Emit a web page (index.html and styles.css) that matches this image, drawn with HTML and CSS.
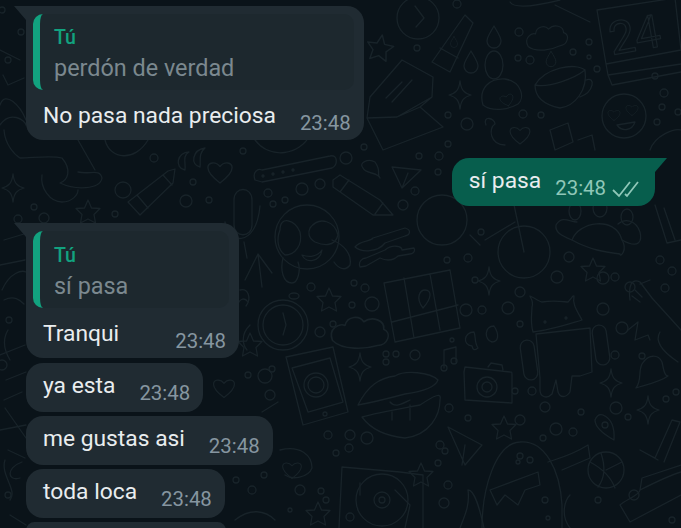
FILE: index.html
```html
<!DOCTYPE html>
<html>
<head>
  <title>Chat</title>
  <link rel="stylesheet" href="styles.css">
</head>
<body>
  <div class="chat">
    <svg class="wallpaper" width="681" height="528" viewBox="0 0 681 528" aria-hidden="true">
      <defs>
        <path id="star" d="M0-12 3.5-4 12-3.5 6 2.5 7.5 11 0 7-7.5 11-6 2.5-12-3.5-3.5-4Z"/>
        <path id="spark" d="M0-14C1-5 4-2 11 0 4 2 1 5 0 14-1 5-4 2-11 0-4-2-1-5 0-14Z"/>
        <path id="heart" d="M0 10C-8 4-11 0-11-4-11-9-4-10 0-5 4-10 11-9 11-4 11 0 8 4 0 10Z"/>
        <path id="cloud" d="M-22 6C-26-4-16-8-12-6-10-14 0-14 3-9 10-14 20-10 19-3 26 0 22 10 14 10 4 13-14 14-22 6Z"/>
        <path id="drop" d="M0-11C4-4 7 0 7 4A7 7 0 0 1-7 4C-7 0-4-4 0-11Z"/>
      </defs>

      <!-- top right -->
      <circle cx="418" cy="18" r="21"/><path d="M415 6 424 18 416 27"/>
      <path d="M432 62 450 72 473 23 465 15Z M440 48 458 58"/><use href="#drop" transform="translate(454 42) scale(.5)"/>
      <use href="#drop" x="494" y="37"/><use href="#drop" x="471" y="62"/>
      <ellipse cx="494" cy="65" rx="9" ry="14"/>
      <use href="#cloud" transform="translate(547 38) scale(.9 .95) rotate(-8)"/>
      <use href="#drop" transform="translate(551 59) scale(.7)"/>
      <path d="M597 10 675-2 681 50 606 64Z M606 64 608 75 681 64 M608 75 612 85 681 72"/>
      <text class="doodle-num" x="612" y="55" transform="rotate(-10 612 55)">24</text>
      <path d="M535 85C545 68 575 62 585 70 588 90 575 106 560 108 545 105 535 98 535 85Z M535 85C550 88 575 78 585 70 M586 80C596 76 594 92 580 97"/>
      <circle cx="624" cy="116" r="22"/><use href="#heart" transform="translate(614 115) scale(.55)"/><use href="#heart" transform="translate(632 110) scale(.55)"/>
      <path d="M617 125C622 132 632 131 635 122Z"/>
      <use href="#spark" x="460" y="95"/>
      <path d="M483 105C478 88 490 78 505 79 522 82 525 98 518 104 508 110 492 112 483 105Z"/><use href="#heart" transform="translate(507 100) scale(.6) rotate(-15)"/>
      <use href="#star" transform="translate(380 48) rotate(10) scale(1.1)"/>
      <path d="M370 97 402 60 433 77 432 97 M370 97 367 118 397 117 420 107 443 127 383 150 367 118 M432 97 420 107 M386 98 402 82 M392 102 412 80 M397 117 432 97"/>
      <path d="M486 125C482 115 495 118 495 124 488 128 490 145 505 145"/><use href="#heart" transform="translate(520 135) scale(.9)"/>
      <path d="M550 130 568 123 573 142 555 150Z M578 140 592 135 595 150"/>
      <circle cx="467" cy="124" r="6"/><circle cx="448" cy="144" r="3"/><circle cx="448" cy="115" r="3"/><circle cx="523" cy="114" r="4"/><circle cx="541" cy="115" r="3"/>
      <path d="M650 150C655 135 675 128 681 130"/><circle cx="664" cy="93" r="4"/><circle cx="662" cy="107" r="3"/><circle cx="678" cy="112" r="3"/><circle cx="657" cy="122" r="3"/>
      <circle cx="519" cy="32" r="4"/><circle cx="518" cy="58" r="3"/><circle cx="530" cy="60" r="4"/><circle cx="573" cy="52" r="3"/><circle cx="589" cy="42" r="3"/><circle cx="589" cy="57" r="2"/><circle cx="597" cy="69" r="3"/><circle cx="655" cy="76" r="3"/><circle cx="417" cy="48" r="3"/><circle cx="457" cy="4" r="4"/>
      <path d="M510 2C515 10 540 5 560 0 M555 5 590 22"/>

      <!-- band below first bubble -->
      <use href="#spark" x="13" y="188"/>
      <path d="M4 130C5 145 15 155 20 158 32 158 52 155 62 158 72 170 68 180 60 183 75 190 100 190 102 178 100 168 90 175 78 172 M42 175C40 188 50 202 62 202 72 202 78 195 78 190"/>
      <path d="M78 140 95 170 M105 140C110 160 135 162 148 140"/>
      <path d="M189 152C177 152 174 168 185 170 186 163 182 156 189 152Z M205 148C192 150 190 165 200 167 201 160 198 154 205 148Z"/>
      <use href="#heart" transform="translate(220 172) scale(1.1)"/>
      <path d="M128 202 168 171 175 169 173 183 140 215Z M137 195 148 208 M163 175 172 185"/>
      <path d="M234 225V200C234 186 252 186 252 200V225C252 238 234 238 234 225Z"/>
      <path d="M225 222C226 243 256 250 260 206 M244 242 247 258"/>
      <path d="M255 180C252 172 258 168 262 170L330 156C338 154 338 165 332 168L262 182Z"/>
      <circle cx="263" cy="176" r="1"/><circle cx="273" cy="174" r="1"/><circle cx="283" cy="172" r="1"/><circle cx="293" cy="170" r="1"/>
      <path d="M255 140C270 160 300 155 310 135"/>
      <path d="M333 180 340 175 380 200 393 215 373 215 333 187Z M349 180 340 192 M375 214 383 203"/>
      <path d="M363 168C358 163 368 158 375 162 382 172 376 174 380 178 378 172 365 174 363 168Z"/>
      <path d="M392 167 421 170 402 188Z M408 173 402 188"/>
      <use href="#star" x="88" y="212"/>
      <circle cx="123" cy="190" r="8"/><circle cx="186" cy="201" r="6"/><circle cx="193" cy="182" r="3"/><circle cx="209" cy="200" r="3"/>
      <circle cx="154" cy="158" r="4"/><circle cx="243" cy="151" r="3"/><circle cx="268" cy="193" r="4"/><circle cx="273" cy="204" r="3"/><circle cx="285" cy="200" r="3"/>
      <circle cx="302" cy="189" r="6"/><circle cx="320" cy="184" r="5"/><circle cx="346" cy="158" r="6"/><circle cx="364" cy="147" r="3"/><circle cx="419" cy="156" r="3"/><circle cx="439" cy="156" r="4"/><circle cx="438" cy="172" r="3"/><circle cx="415" cy="191" r="4"/><circle cx="403" cy="205" r="5"/><circle cx="34" cy="207" r="3"/><circle cx="18" cy="219" r="4"/><circle cx="44" cy="218" r="5"/><circle cx="115" cy="214" r="3"/>

      <!-- middle -->
      <circle cx="442" cy="220" r="25"/><circle cx="524" cy="252" r="26"/>
      <path d="M524 252 513 200 M485 240 515 222 M470 235 480 245"/><circle cx="481" cy="232" r="3"/>
      <path d="M572 240C578 222 615 215 622 240 628 250 620 258 620 254 605 252 590 250 572 240Z"/>
      <path d="M572 240C560 235 555 232 556 225 562 215 570 222 577 222 M622 240C640 250 642 240 640 232 636 220 625 218 618 224"/>
      <ellipse cx="575" cy="211" rx="6" ry="9"/><ellipse cx="600" cy="208" rx="7" ry="9"/><ellipse cx="627" cy="217" rx="6" ry="8"/>
      <path d="M655 205 667 243 681 240 M664 208 675 240"/>
      <circle cx="307" cy="237" r="32"/>
      <path d="M280 230C280 215 295 220 300 232 303 245 295 255 285 255 278 250 276 240 280 230Z M310 228C320 215 335 222 338 235 335 248 322 245 315 242 308 238 308 232 310 228Z"/>
      <path d="M283 258C280 270 283 283 292 283 298 283 301 270 298 262 M332 240C345 245 352 255 350 265 345 272 338 268 334 262"/>
      <path d="M302 255C310 258 318 256 322 250 320 262 306 264 302 255Z"/>
      <path d="M245 280 258 254 272 273 M258 254 262 287"/>
      <path d="M355 247C360 240 370 242 373 238L405 228C412 230 410 235 405 236L385 243C378 252 362 253 355 247Z"/>
      <path d="M360 267C358 262 362 258 366 258L385 250C392 244 402 246 402 250L414 248C416 252 412 254 410 254L398 256C392 262 384 260 380 258L366 266Z"/>
      <path d="M384 283 450 270 460 328 395 342Z M404 278 414 338 M430 274 440 330 M392 322 458 305"/>
      <path d="M423 308C415 298 420 290 425 290 432 290 432 298 423 308Z"/>
      <use href="#star" x="329" y="300"/><use href="#star" x="593" y="270"/>
      <use href="#spark" x="489" y="281"/>
      <circle cx="283" cy="325" r="25"/><circle cx="283" cy="325" r="20"/><path d="M283 313 286 325 283 335"/>
      <ellipse cx="294" cy="296" rx="5" ry="3"/><path d="M248 302C244 296 238 300 238 306"/>
      <use href="#cloud" transform="translate(360 333) scale(1.25)"/>
      <path d="M474 332C464 332 462 345 472 346 473 350 474 351 478 348 474 342 476 336 474 332Z M494 326C484 326 484 340 492 342 498 342 500 335 494 326Z"/>
      <path d="M286 357 333 347 348 412 303 425Z M292 368 330 358 343 402 308 412Z"/>
      <circle cx="316" cy="385" r="12"/><circle cx="316" cy="385" r="8"/>
      <circle cx="325" cy="414" r="2"/>
      <path d="M358 405C368 385 380 378 395 376 405 370 430 372 438 380 435 388 420 392 405 394 390 398 375 402 358 405Z"/>
      <path d="M362 417C380 412 405 408 420 405 435 395 442 392 440 400 440 415 430 435 405 438 385 436 370 428 362 417Z M390 402C395 408 402 404 410 400 M392 412 392 420 M410 405V420"/>
      <use href="#spark" x="360" y="367"/>
      <path d="M444 368V350L456 347V362 M444 350 456 347"/><circle cx="444" cy="368" r="3"/><circle cx="454" cy="361" r="3"/>
      <path d="M465 367 510 372C512 372 512 372 512 376V403L465 400 464 372ZM488 367 491 363 502 365 503 370"/>
      <circle cx="487" cy="387" r="10"/><circle cx="487" cy="387" r="5"/>
      <path d="M532 307C534 300 530 298 530 296 538 300 540 302 542 302 555 300 565 302 568 302 572 298 573 295 574 296 572 305 578 312 582 320 565 325 550 330 533 332 530 322 532 312 532 307Z"/>
      <path d="M536 334 590 328 592 372 580 376 572 376 570 392C566 398 560 398 558 392L556 380 552 394C546 400 540 396 540 390V378Z"/>
      <rect x="522" y="340" width="14" height="40" rx="7" transform="rotate(-8 529 360)"/>
      <rect x="594" y="325" width="14" height="40" rx="7" transform="rotate(-8 601 345)"/>
      <circle cx="545" cy="322" r="1"/><circle cx="566" cy="318" r="1"/>
      <path d="M630 300C628 285 632 278 640 282L652 298 681 330 M632 296 640 302 M635 290 642 297 M640 284 650 280"/>
      <path d="M628 330 638 322 635 340 648 335 650 340"/>
      <path d="M660 332C655 340 660 350 678 362"/>
      <path d="M636 388C642 380 638 372 642 364 648 354 658 354 662 362 664 372 665 376 668 376 660 382 645 385 636 388Z"/><circle cx="642" cy="356" r="3"/>
      <use href="#spark" x="611" y="383"/><use href="#spark" x="648" y="410"/>
      <circle cx="452" cy="340" r="2"/><circle cx="466" cy="310" r="6"/><circle cx="482" cy="310" r="4"/><circle cx="508" cy="308" r="6"/><circle cx="520" cy="324" r="3"/><circle cx="520" cy="292" r="5"/><circle cx="475" cy="280" r="3"/><circle cx="447" cy="260" r="3"/><circle cx="468" cy="258" r="4"/>
      <circle cx="311" cy="287" r="4"/><circle cx="354" cy="283" r="3"/><circle cx="365" cy="288" r="4"/><circle cx="352" cy="305" r="3"/><circle cx="372" cy="304" r="7"/><circle cx="320" cy="332" r="5"/><circle cx="333" cy="324" r="3"/>
      <circle cx="386" cy="354" r="3"/><circle cx="396" cy="354" r="3"/><circle cx="415" cy="355" r="5"/><circle cx="386" cy="362" r="3"/>
      <circle cx="569" cy="257" r="5"/><circle cx="557" cy="277" r="6"/><circle cx="603" cy="278" r="6"/><circle cx="615" cy="277" r="4"/><circle cx="630" cy="287" r="5"/><circle cx="660" cy="260" r="4"/><circle cx="672" cy="271" r="4"/><circle cx="665" cy="288" r="4"/>
      <circle cx="603" cy="309" r="6"/><circle cx="622" cy="328" r="6"/><circle cx="515" cy="391" r="3"/><circle cx="532" cy="391" r="4"/><circle cx="520" cy="420" r="5"/>
      <circle cx="615" cy="355" r="4"/><circle cx="676" cy="392" r="3"/><circle cx="666" cy="399" r="3"/>
      <circle cx="616" cy="408" r="6"/><circle cx="628" cy="417" r="3"/>
      <circle cx="545" cy="407" r="5"/><circle cx="556" cy="429" r="6"/><circle cx="573" cy="432" r="4"/><circle cx="543" cy="438" r="3"/><circle cx="581" cy="412" r="3"/>

      <!-- bottom -->
      <path d="M448 427 482 445 465 465Z M465 445 462 465"/>
      <use href="#star" x="504" y="428"/>
      <path d="M482 528C482 490 495 443 520 442 545 440 560 470 562 505L562 528"/>
      <path d="M562 470 590 458 588 445C572 455 560 458 548 462"/>
      <path d="M490 490 538 472 540 485 525 490 518 505 505 495 497 505Z"/>
      <circle cx="520" cy="456" r="3"/><circle cx="530" cy="460" r="3"/><circle cx="518" cy="462" r="2"/><circle cx="545" cy="500" r="3"/><circle cx="548" cy="518" r="2"/>
      <circle cx="606" cy="470" r="18"/><path d="M590 462C605 470 612 480 615 488 M601 453C605 465 605 478 598 487 M606 470 622 462"/>
      <path d="M603 415C610 418 615 425 614 440 605 435 595 428 595 420 597 415 600 414 603 415Z"/><circle cx="605" cy="425" r="3"/>
      <path d="M640 450 655 458 672 420 680 422 664 462 M640 450 658 460"/>
      <path d="M620 505C625 500 640 495 640 490L642 478 681 465 M620 505 630 522 681 495 M640 490C650 485 670 475 681 472"/>
      <circle cx="634" cy="495" r="5"/><circle cx="598" cy="500" r="3"/>
      <path d="M570 495C565 500 560 515 570 528"/>
      <path d="M342 467 400 472 423 475 423 528 M342 467 339 528"/>
      <circle cx="382" cy="500" r="26"/><circle cx="382" cy="500" r="8"/><circle cx="382" cy="500" r="3"/>
      <use href="#star" x="421" y="475"/><path d="M360 483V495"/><path d="M395 490 410 505 405 528"/>
      <use href="#star" x="318" y="514"/>
      <path d="M280 450C300 445 312 455 312 468 308 478 292 480 285 475"/><use href="#heart" transform="translate(292 470) scale(.85)"/>
      <path d="M460 528C465 515 470 505 468 490 475 490 480 510 484 528"/>
      <circle cx="367" cy="438" r="6"/><circle cx="350" cy="435" r="5"/><circle cx="349" cy="448" r="4"/><circle cx="328" cy="435" r="4"/><circle cx="336" cy="453" r="3"/><circle cx="326" cy="500" r="3"/><circle cx="300" cy="490" r="5"/><circle cx="321" cy="491" r="3"/><circle cx="290" cy="510" r="2"/>
      <circle cx="449" cy="408" r="4"/><circle cx="468" cy="418" r="3"/><circle cx="440" cy="445" r="4"/><circle cx="445" cy="451" r="3"/><circle cx="438" cy="463" r="3"/><circle cx="448" cy="485" r="4"/><circle cx="444" cy="503" r="5"/><circle cx="350" cy="517" r="4"/><circle cx="672" cy="520" r="3"/>

      <!-- around the left column -->
      <use href="#star" x="250" y="345"/>
      <use href="#heart" transform="translate(224 388) scale(.95)"/>
      <path d="M240 290C248 288 252 298 246 306 M250 325C240 335 243 345 247 350"/>
      <path d="M4 300C14 295 20 300 24 304 M8 330C2 340 4 350 10 360 M0 355 25 345 M6 380 26 372 M4 400 22 392 M5 408 26 438 M0 430 26 425 M8 450 25 458"/>
      <path d="M5 460C0 475 18 490 10 500 M10 515 26 525 M22 462C5 468 8 482 20 478"/>
      <path d="M4 240 24 234 M0 265 25 260 M2 290C10 272 22 270 26 272"/>
      <circle cx="9" cy="320" r="3"/><circle cx="2" cy="365" r="5"/><circle cx="8" cy="495" r="3"/><circle cx="2" cy="10" r="3"/><circle cx="21" cy="32" r="3"/><circle cx="8" cy="60" r="3"/>
      <path d="M0 50 20 60 M3 75 8 85 24 78 M0 105C5 90 20 105 26 120 M0 125C10 110 25 120 26 125"/>
      <circle cx="265" cy="376" r="7"/><circle cx="248" cy="375" r="3"/><circle cx="272" cy="369" r="3"/>
      <circle cx="236" cy="480" r="3"/><circle cx="252" cy="490" r="4"/><circle cx="264" cy="475" r="3"/><path d="M235 520C250 508 265 510 275 520"/><circle cx="270" cy="395" r="5"/><circle cx="245" cy="425" r="3"/>
      <path d="M262 412 278 402"/>
    </svg>

    <div class="bubble bubble-in bubble-tail bubble-first">
      <div class="quote">
        <div class="quote-name">Tú</div>
        <div class="quote-text">perdón de verdad</div>
      </div>
      <div class="row">
        <span class="text">No pasa nada preciosa</span>
        <span class="time">23:48</span>
      </div>
    </div>

    <div class="bubble bubble-out bubble-tail">
      <div class="row">
        <span class="text">sí pasa</span>
        <span class="time">23:48</span>
        <svg class="ticks" width="28" height="18" viewBox="0 0 28 18"><path d="M1 10 7 16 18 2M13 14 15 16 26 2"/></svg>
      </div>
    </div>

    <div class="bubble bubble-in bubble-tail bubble-reply">
      <div class="quote">
        <div class="quote-name">Tú</div>
        <div class="quote-text">sí pasa</div>
      </div>
      <div class="row row-wide">
        <span class="text">Tranqui</span>
        <span class="time">23:48</span>
      </div>
    </div>

    <div class="bubble bubble-in">
      <div class="row">
        <span class="text">ya esta</span>
        <span class="time">23:48</span>
      </div>
    </div>

    <div class="bubble bubble-in">
      <div class="row">
        <span class="text">me gustas asi</span>
        <span class="time">23:48</span>
      </div>
    </div>

    <div class="bubble bubble-in">
      <div class="row">
        <span class="text">toda loca</span>
        <span class="time">23:48</span>
      </div>
    </div>

    <div class="bubble bubble-in bubble-cut"></div>
  </div>
</body>
</html>
```

FILE: styles.css
```css
* {
  box-sizing: border-box;
}

body {
  margin: 0;
  background-color: #0a1319;
  font-family: Roboto, "Liberation Sans", sans-serif;
}

.chat {
  position: relative;
  width: 681px;
  height: 528px;
  padding: 6px 26px 0 26px;
  overflow: hidden;
  display: flex;
  flex-direction: column;
  align-items: flex-start;
  gap: 4px;
}

.wallpaper {
  position: absolute;
  top: 0;
  left: 0;
  fill: none;
  stroke: #182329;
  stroke-width: 1.3;
  stroke-linecap: round;
  stroke-linejoin: round;
  filter: blur(0.4px);
}

.doodle-num {
  font-family: Roboto, sans-serif;
  font-size: 46px;
}

.bubble {
  position: relative;
  padding: 9px 13px 8px 17px;
  border-radius: 17px;
}

.bubble-in {
  background-color: #202b32;
}

.bubble-out {
  align-self: flex-end;
  margin: 14px 0 13px;
  padding-bottom: 7px;
  padding-right: 15px;
  background-color: #075e4d;
  border-radius: 17px 0 17px 17px;
}

.bubble-tail.bubble-in {
  border-top-left-radius: 0;
}

.bubble-tail::before {
  content: "";
  position: absolute;
  top: 0;
  width: 12px;
  height: 14px;
}

.bubble-tail.bubble-in::before {
  left: -12px;
  background-color: #202b32;
  clip-path: polygon(0 0, 100% 0, 100% 100%);
}

.bubble-tail.bubble-out::before {
  right: -12px;
  background-color: #075e4d;
  clip-path: polygon(0 0, 100% 0, 0 100%);
}

.bubble-first,
.bubble-reply {
  padding: 8px 10px 6px 7px;
}

.bubble-reply {
  width: 213px;
  margin-bottom: 1px;
}

.quote {
  height: 76px;
  margin-bottom: 12px;
  padding: 11px 0 0 14px;
  background-color: #1d282e;
  border-left: 7px solid #12a27f;
  border-radius: 10px;
}

.bubble-reply .quote {
  height: 77px;
  padding-top: 12px;
}

.quote-name {
  font-size: 19.5px;
  font-weight: 500;
  line-height: 26px;
  color: #12a27f;
}

.quote-text {
  margin-top: 2px;
  font-size: 23.4px;
  line-height: 30px;
  color: #7b888f;
}

.bubble-first .row,
.bubble-reply .row {
  padding-left: 10px;
  padding-right: 3px;
}

.row {
  display: flex;
  align-items: flex-start;
  gap: 24px;
}

.row-wide {
  justify-content: space-between;
}

.text {
  font-size: 22.8px;
  line-height: 28px;
  color: #e9edef;
  white-space: nowrap;
}

.time {
  margin-top: 10px;
  font-size: 20.4px;
  line-height: 22px;
  color: #8696a0;
}

.bubble-out .time {
  color: #8fc7b8;
}

.bubble-out .row {
  gap: 14px;
}

.ticks {
  margin: 13px 0 0 -8px;
  fill: none;
  stroke: #8fc7b8;
  stroke-width: 1.8;
}

.bubble-cut {
  width: 200px;
  height: 49px;
}
```
